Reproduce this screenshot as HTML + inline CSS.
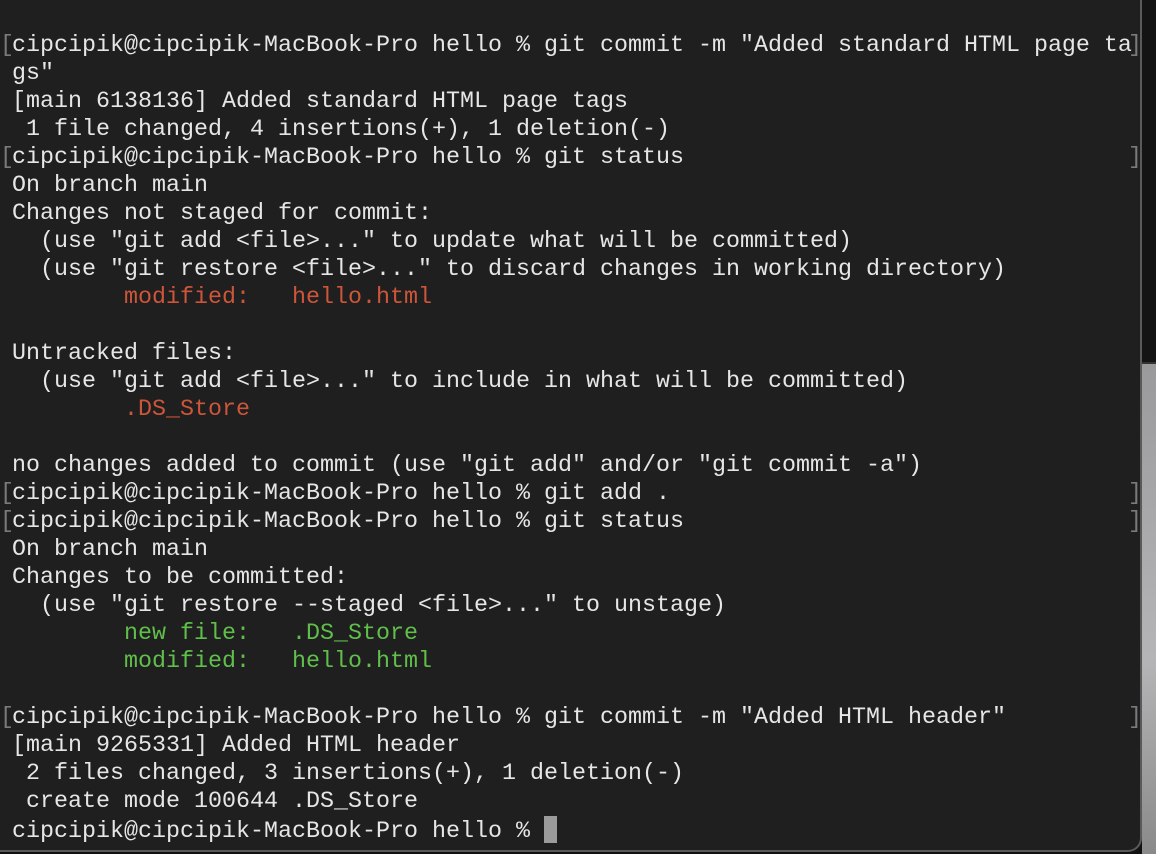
<!DOCTYPE html>
<html><head><meta charset="utf-8"><style>
html,body{margin:0;padding:0;width:1156px;height:854px;overflow:hidden;background:#111;}
.rs{position:absolute;left:1142px;top:364px;width:14px;height:490px;background:linear-gradient(180deg,#9a9a9c,#b5b5b7 60%,#8a8a8a);}
.rt{position:absolute;left:1142px;top:0;width:14px;height:364px;background:#141414;border-bottom:2px solid #333;box-sizing:border-box;}
.term{position:absolute;left:0;top:-20px;width:1140px;height:870px;background:#1f1f1f;border-right:2px solid #5a5a5a;border-bottom:2px solid #5a5a5a;border-radius:0 0 14px 0;}
pre{position:absolute;left:12px;top:32px;margin:0;font-family:"Liberation Mono",monospace;font-size:23.33px;line-height:28px;color:#e6e6e6;}
.r{color:#cc553a}.g{color:#5fbf4a}
.b{position:absolute;font-family:"Liberation Mono",monospace;font-size:23.33px;line-height:28px;color:#7a7a7a;}
.cur{display:inline-block;width:13px;height:27px;background:#9b9b9b;vertical-align:-6px;}
</style></head><body>
<div class="rt"></div><div class="rs"></div>
<div class="term"></div>
<pre>cipcipik@cipcipik-MacBook-Pro hello % git commit -m "Added standard HTML page ta
gs"
[main 6138136] Added standard HTML page tags
 1 file changed, 4 insertions(+), 1 deletion(-)
cipcipik@cipcipik-MacBook-Pro hello % git status
On branch main
Changes not staged for commit:
  (use "git add &lt;file&gt;..." to update what will be committed)
  (use "git restore &lt;file&gt;..." to discard changes in working directory)
        <span class="r">modified:   hello.html</span>

Untracked files:
  (use "git add &lt;file&gt;..." to include in what will be committed)
        <span class="r">.DS_Store</span>

no changes added to commit (use "git add" and/or "git commit -a")
cipcipik@cipcipik-MacBook-Pro hello % git add .
cipcipik@cipcipik-MacBook-Pro hello % git status
On branch main
Changes to be committed:
  (use "git restore --staged &lt;file&gt;..." to unstage)
        <span class="g">new file:   .DS_Store</span>
        <span class="g">modified:   hello.html</span>

cipcipik@cipcipik-MacBook-Pro hello % git commit -m "Added HTML header"
[main 9265331] Added HTML header
 2 files changed, 3 insertions(+), 1 deletion(-)
 create mode 100644 .DS_Store
cipcipik@cipcipik-MacBook-Pro hello % <span class="cur"></span></pre>
<div class="b" style="left:0;top:32px">[</div><div class="b" style="left:1128px;top:32px">]</div>
<div class="b" style="left:0;top:144px">[</div><div class="b" style="left:1128px;top:144px">]</div>
<div class="b" style="left:0;top:480px">[</div><div class="b" style="left:1128px;top:480px">]</div>
<div class="b" style="left:0;top:508px">[</div><div class="b" style="left:1128px;top:508px">]</div>
<div class="b" style="left:0;top:704px">[</div><div class="b" style="left:1128px;top:704px">]</div>
</body></html>
